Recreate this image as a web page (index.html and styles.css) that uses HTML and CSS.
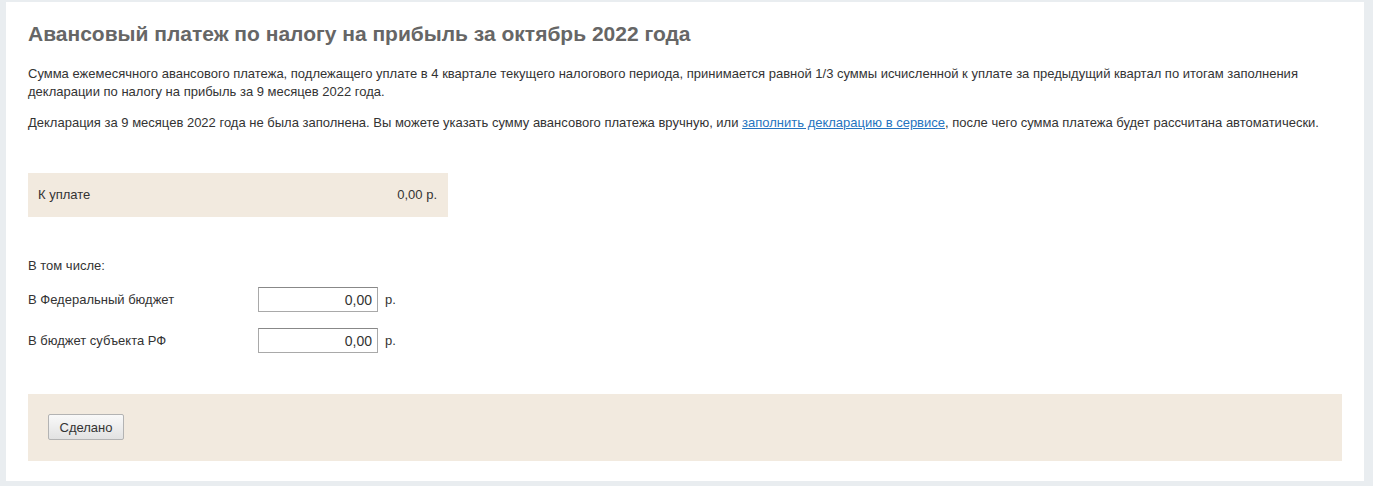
FILE: index.html
```html
<!DOCTYPE html>
<html lang="ru">
<head>
<meta charset="utf-8">
<title>Авансовый платеж</title>
<link rel="stylesheet" href="styles.css">
</head>
<body>
<div class="panel">
  <h1 class="title">Авансовый платеж по налогу на прибыль за октябрь 2022 года</h1>
  <p class="text">Сумма ежемесячного авансового платежа, подлежащего уплате в 4 квартале текущего налогового периода, принимается равной 1/3 суммы исчисленной к уплате за предыдущий квартал по итогам заполнения декларации по налогу на прибыль за 9 месяцев 2022 года.</p>
  <p class="text text-second">Декларация за 9 месяцев 2022 года не была заполнена. Вы можете указать сумму авансового платежа вручную, или <a href="#" class="link">заполнить декларацию в сервисе</a>, после чего сумма платежа будет рассчитана автоматически.</p>

  <div class="total">
    <span>К уплате</span>
    <span>0,00 р.</span>
  </div>

  <div class="including">В том числе:</div>
  <div class="row">
    <span class="row-label">В Федеральный бюджет</span>
    <input class="amount" type="text" value="0,00">
    <span class="unit">р.</span>
  </div>
  <div class="row">
    <span class="row-label">В бюджет субъекта РФ</span>
    <input class="amount" type="text" value="0,00">
    <span class="unit">р.</span>
  </div>

  <div class="footer">
    <button class="btn" type="button">Сделано</button>
  </div>
</div>
</body>
</html>
```
FILE: styles.css
```css
html, body {
  margin: 0;
  padding: 0;
}
body {
  background: #e9edf0;
  font-family: Arial, "Liberation Sans", sans-serif;
  color: #333;
  font-size: 13px;
  line-height: 18px;
  padding: 2px 9px 5px 6px;
}
.panel {
  background: #fff;
  padding: 20px 22px 19px 22px;
  height: 479px;
  box-sizing: border-box;
}
.title {
  margin: 0;
  font-size: 21px;
  font-weight: bold;
  color: #666;
  line-height: 24px;
}
.text {
  margin: 19px 0 0;
  line-height: 18px;
  font-size: 13px;
  color: #333;
}
.text-second {
  margin-top: 13px;
}
.link {
  color: #2574c0;
  text-decoration: underline;
}
.total {
  margin-top: 41px;
  width: 420px;
  height: 44px;
  box-sizing: border-box;
  background: #f2eadf;
  display: flex;
  align-items: center;
  justify-content: space-between;
  padding: 0 11px 0 10px;
}
.including {
  margin-top: 40px;
  line-height: 18px;
}
.row {
  display: flex;
  align-items: center;
  margin-top: 12px;
  height: 25px;
}
.row + .row {
  margin-top: 16px;
}
.row-label {
  width: 230px;
}
.amount {
  width: 120px;
  height: 25px;
  box-sizing: border-box;
  border: 1px solid #a9a9a9;
  border-top-color: #888;
  padding: 0 5px 0 4px;
  text-align: right;
  font-family: Arial, "Liberation Sans", sans-serif;
  font-size: 14px;
  color: #333;
  margin: 0;
}
.unit {
  margin-left: 7px;
}
.footer {
  margin-top: 41px;
  background: #f2eadf;
  height: 67px;
  box-sizing: border-box;
  padding: 20px;
  display: flex;
  align-items: flex-start;
}
.btn {
  width: 76px;
  height: 26px;
  box-sizing: border-box;
  border: 1px solid #b3b3b3;
  border-radius: 2px;
  background: linear-gradient(#f9f9f9, #e2e2e2);
  font-family: Arial, "Liberation Sans", sans-serif;
  font-size: 13px;
  color: #333;
  padding: 0;
}
```
